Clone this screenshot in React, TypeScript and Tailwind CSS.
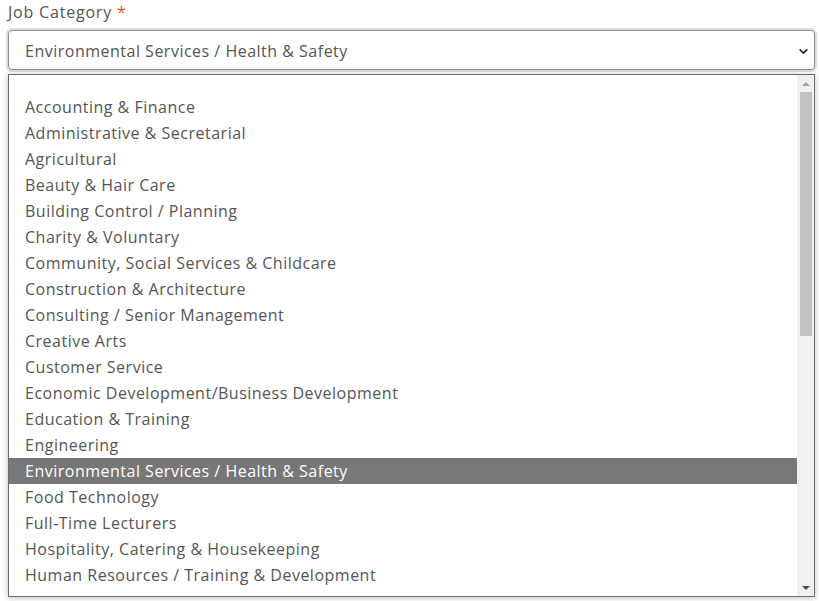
import { ChevronDown } from 'lucide-react';

const CATEGORIES = [
  'Accounting & Finance',
  'Administrative & Secretarial',
  'Agricultural',
  'Beauty & Hair Care',
  'Building Control / Planning',
  'Charity & Voluntary',
  'Community, Social Services & Childcare',
  'Construction & Architecture',
  'Consulting / Senior Management',
  'Creative Arts',
  'Customer Service',
  'Economic Development/Business Development',
  'Education & Training',
  'Engineering',
  'Environmental Services / Health & Safety',
  'Food Technology',
  'Full-Time Lecturers',
  'Hospitality, Catering & Housekeeping',
  'Human Resources / Training & Development',
];

const SELECTED = 'Environmental Services / Health & Safety';

export default function App() {
  return (
    <div className="w-[819px] h-[601px] bg-white overflow-hidden font-['Open_Sans',sans-serif] text-[16px] tracking-[0.5px] text-[#555] pl-2 pr-1">
      {/* Label */}
      <div className="h-[25px] leading-[24px] tracking-[0.8px]">
        Job Category <span className="text-[#e4572e]">*</span>
      </div>

      {/* Select */}
      <div className="mt-[5px] h-[40px] rounded-[4px] border border-[#8c8c8c] shadow-[0_0_0_2px_#dcdcdc] flex items-center justify-between pl-[16px] pr-[4px] pt-[2px]">
        <span>{SELECTED}</span>
        <ChevronDown className="w-[13px] h-[13px] text-[#333]" strokeWidth={3.5} />
      </div>

      {/* Dropdown list */}
      <div className="mt-[4px] h-[523px] border border-[#6b6b6b] shadow-[0_1px_6px_rgba(0,0,0,0.25)] flex overflow-hidden">
        <div className="flex-1 flex flex-col overflow-hidden">
          <div className="h-[19px] shrink-0" />
          {CATEGORIES.map((c) => (
            <div
              key={c}
              className={
                'h-[26px] shrink-0 flex items-center pl-[16px] ' +
                (c === SELECTED ? 'bg-[#777777] text-white' : '')
              }
            >
              {c}
            </div>
          ))}
        </div>

        {/* Scrollbar */}
        <div className="w-[17px] shrink-0 bg-[#f0f0f0] flex flex-col items-center">
          <div className="h-[17px] flex items-center justify-center">
            <div className="w-0 h-0 border-l-[4px] border-r-[4px] border-b-[4px] border-l-transparent border-r-transparent border-b-[#a3a3a3]" />
          </div>
          <div className="w-[12px] h-[244px] bg-[#c1c1c1]" />
          <div className="flex-1" />
          <div className="h-[17px] flex items-center justify-center">
            <div className="w-0 h-0 border-l-[4px] border-r-[4px] border-t-[4px] border-l-transparent border-r-transparent border-t-[#505050]" />
          </div>
        </div>
      </div>
    </div>
  );
}
